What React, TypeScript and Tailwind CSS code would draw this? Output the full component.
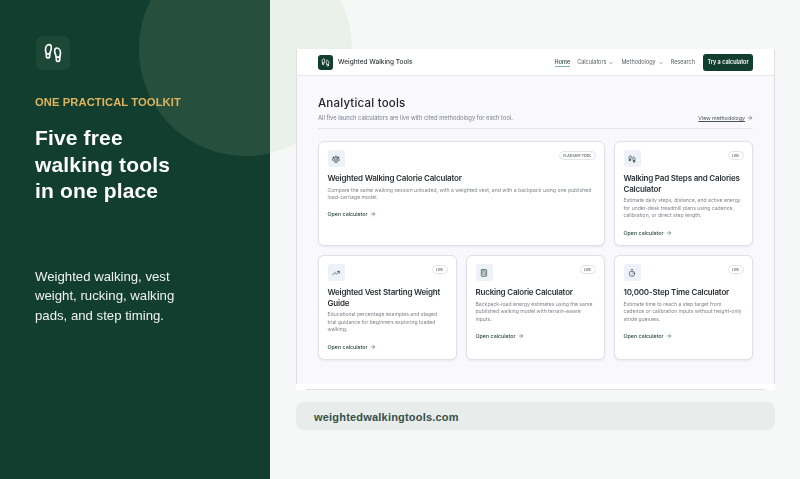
import React from "react";
import { ArrowRight, ChevronDown, Footprints, Scale, TrendingUp, Calculator, Timer } from "lucide-react";

type Tool = { title: string; desc: string; badge: string; icon: React.ReactNode; span?: boolean };

const ic = "w-[8px] h-[8px] text-[#24443a]";
const tools: Tool[] = [
  { title: "Weighted Walking Calorie Calculator", desc: "Compare the same walking session unloaded, with a weighted vest, and with a backpack using one published load-carriage model.", badge: "FLAGSHIP TOOL", icon: <Scale className={ic} strokeWidth={2} />, span: true },
  { title: "Walking Pad Steps and Calories Calculator", desc: "Estimate daily steps, distance, and active energy for under-desk treadmill plans using cadence, calibration, or direct step length.", badge: "LIVE", icon: <Footprints className={ic} strokeWidth={2} /> },
  { title: "Weighted Vest Starting Weight Guide", desc: "Educational percentage examples and staged trial guidance for beginners exploring loaded walking.", badge: "LIVE", icon: <TrendingUp className={ic} strokeWidth={2} /> },
  { title: "Rucking Calorie Calculator", desc: "Backpack-load energy estimates using the same published walking model with terrain-aware inputs.", badge: "LIVE", icon: <Calculator className={ic} strokeWidth={2} /> },
  { title: "10,000-Step Time Calculator", desc: "Estimate time to reach a step target from cadence or calibration inputs without height-only stride guesses.", badge: "LIVE", icon: <Timer className={ic} strokeWidth={2} /> },
];

function Card({ t }: { t: Tool }) {
  return (
    <div className={`${t.span ? "col-span-2" : ""} bg-white rounded-[6px] border border-[#dfe1e8] shadow-[0_1px_2px_rgba(30,40,60,0.08)] pt-[8px] px-[8.5px] pb-[8px]`}>
      <div className="flex items-start justify-between">
        <div className="w-[17px] h-[17px] rounded-[3px] bg-[#eef1fa] flex items-center justify-center">{t.icon}</div>
        <span className="mt-[0.5px] h-[9.5px] px-[3px] rounded-full border border-[#e2e4ea] text-[3.6px] leading-[8px] font-medium text-[#4a5258]">{t.badge}</span>
      </div>
      <h3 className="mt-[6px] text-[8px] leading-[10.5px] font-semibold text-[#2b3236] tracking-[-0.2px]">{t.title}</h3>
      <p className="mt-[3px] text-[5.1px] leading-[7.7px] text-[#7f858c]">{t.desc}</p>
      <div className="mt-[8.5px] flex items-center gap-[2px] text-[5.3px] leading-[8px] font-medium text-[#2c4a40]">
        Open calculator <ArrowRight className="w-[6px] h-[6px]" strokeWidth={2} />
      </div>
    </div>
  );
}

export default function App() {
  return (
    <div className="relative w-[800px] h-[479px] overflow-hidden flex bg-[#f5f8f6] font-['Liberation_Sans',sans-serif]">
      <div className="absolute left-[139px] top-[-58px] w-[213px] h-[214px] rounded-full bg-[#eaf1ea]" />
      <aside className="relative w-[270px] h-full shrink-0 overflow-hidden bg-[#123e30] pl-[35px] pt-[36px] text-white">
        <div className="absolute left-[139px] top-[-58px] w-[213px] h-[214px] rounded-full bg-[#264f3e]" />
        <div className="relative blur-[0.3px]">
          <div className="ml-[1px] w-[34px] h-[34px] rounded-[7px] bg-[#1d4838] flex items-center justify-center">
            <Footprints className="w-[20px] h-[20px] text-white" strokeWidth={2} />
          </div>
          <p className="mt-[25px] text-[11.2px] leading-[14px] font-bold text-[#e2b45e] tracking-[0.1px]">ONE PRACTICAL TOOLKIT</p>
          <h1 className="mt-[16px] text-[21px] leading-[26.5px] font-bold tracking-[0.15px]">Five free<br />walking tools<br />in one place</h1>
          <p className="mt-[62px] text-[13.2px] leading-[19.5px] text-[#f0f3f0]">Weighted walking, vest<br />weight, rucking, walking<br />pads, and step timing.</p>
        </div>
      </aside>
      <main className="relative flex-1 pl-[26px] pr-[25px] pt-[49px] font-['Inter',sans-serif]">
        <div className="border-x border-[#dddfe3] bg-[#f8f8fd] h-[335px] blur-[0.3px]">
          <header className="h-[27px] bg-white border-b border-[#e6e8ec] px-[21px] flex items-center justify-between">
            <div className="flex items-center gap-[5px]">
              <div className="w-[15px] h-[15px] rounded-[3px] bg-[#123e30] flex items-center justify-center">
                <Footprints className="w-[9px] h-[9px] text-white" strokeWidth={2} />
              </div>
              <span className="pt-[2px] text-[6.5px] font-medium text-[#30363a]">Weighted Walking Tools</span>
            </div>
            <nav className="flex items-center gap-[7px] text-[5.5px] text-[#5a6268]">
              <span className="mt-[1px] font-medium text-[#2c4a40] border-b border-[#7fb49d] leading-[7px]">Home</span>
              <span className="pt-[1px] flex items-center gap-[2px]">Calculators <ChevronDown className="w-[6px] h-[6px]" /></span>
              <span className="pt-[1px] flex items-center gap-[2px]">Methodology <ChevronDown className="w-[6px] h-[6px]" /></span>
              <span className="pt-[1px] mr-[1px]">Research</span>
              <span className="h-[17px] w-[50px] rounded-[3px] bg-[#123e30] text-white font-semibold flex items-center justify-center">Try a calculator</span>
            </nav>
          </header>
          <div className="px-[21px] pt-[20px]">
            <div className="flex items-end justify-between pb-[6px] border-b border-[#e8e9ee]">
              <div>
                <h2 className="text-[11.5px] leading-[15px] font-medium text-[#22282c] tracking-[0.2px]">Analytical tools</h2>
                <p className="mt-[3px] text-[5.8px] leading-[8px] text-[#7a8088]">All five launch calculators are live with cited methodology for each tool.</p>
              </div>
              <span className="flex items-center gap-[2px] text-[5.3px] leading-[8px] text-[#4a5258] underline">View methodology <ArrowRight className="w-[6px] h-[6px]" /></span>
            </div>
            <div className="mt-[12px] grid grid-cols-3 gap-[9px] grid-rows-[105px_105px]">
              {tools.map((t) => <Card key={t.title} t={t} />)}
            </div>
          </div>
        </div>
        <div className="h-[6px] bg-white">
          <div className="mx-[10px] pt-[5px] border-b border-[#dfe3e2]" />
        </div>
        <div className="mt-[12px] h-[28px] rounded-[8px] bg-[#e8edeb] pl-[18px] pt-[2px] flex items-center text-[11px] font-bold text-[#36504a] font-['Liberation_Sans',sans-serif] tracking-[0.2px]">weightedwalkingtools.com</div>
      </main>
    </div>
  );
}
